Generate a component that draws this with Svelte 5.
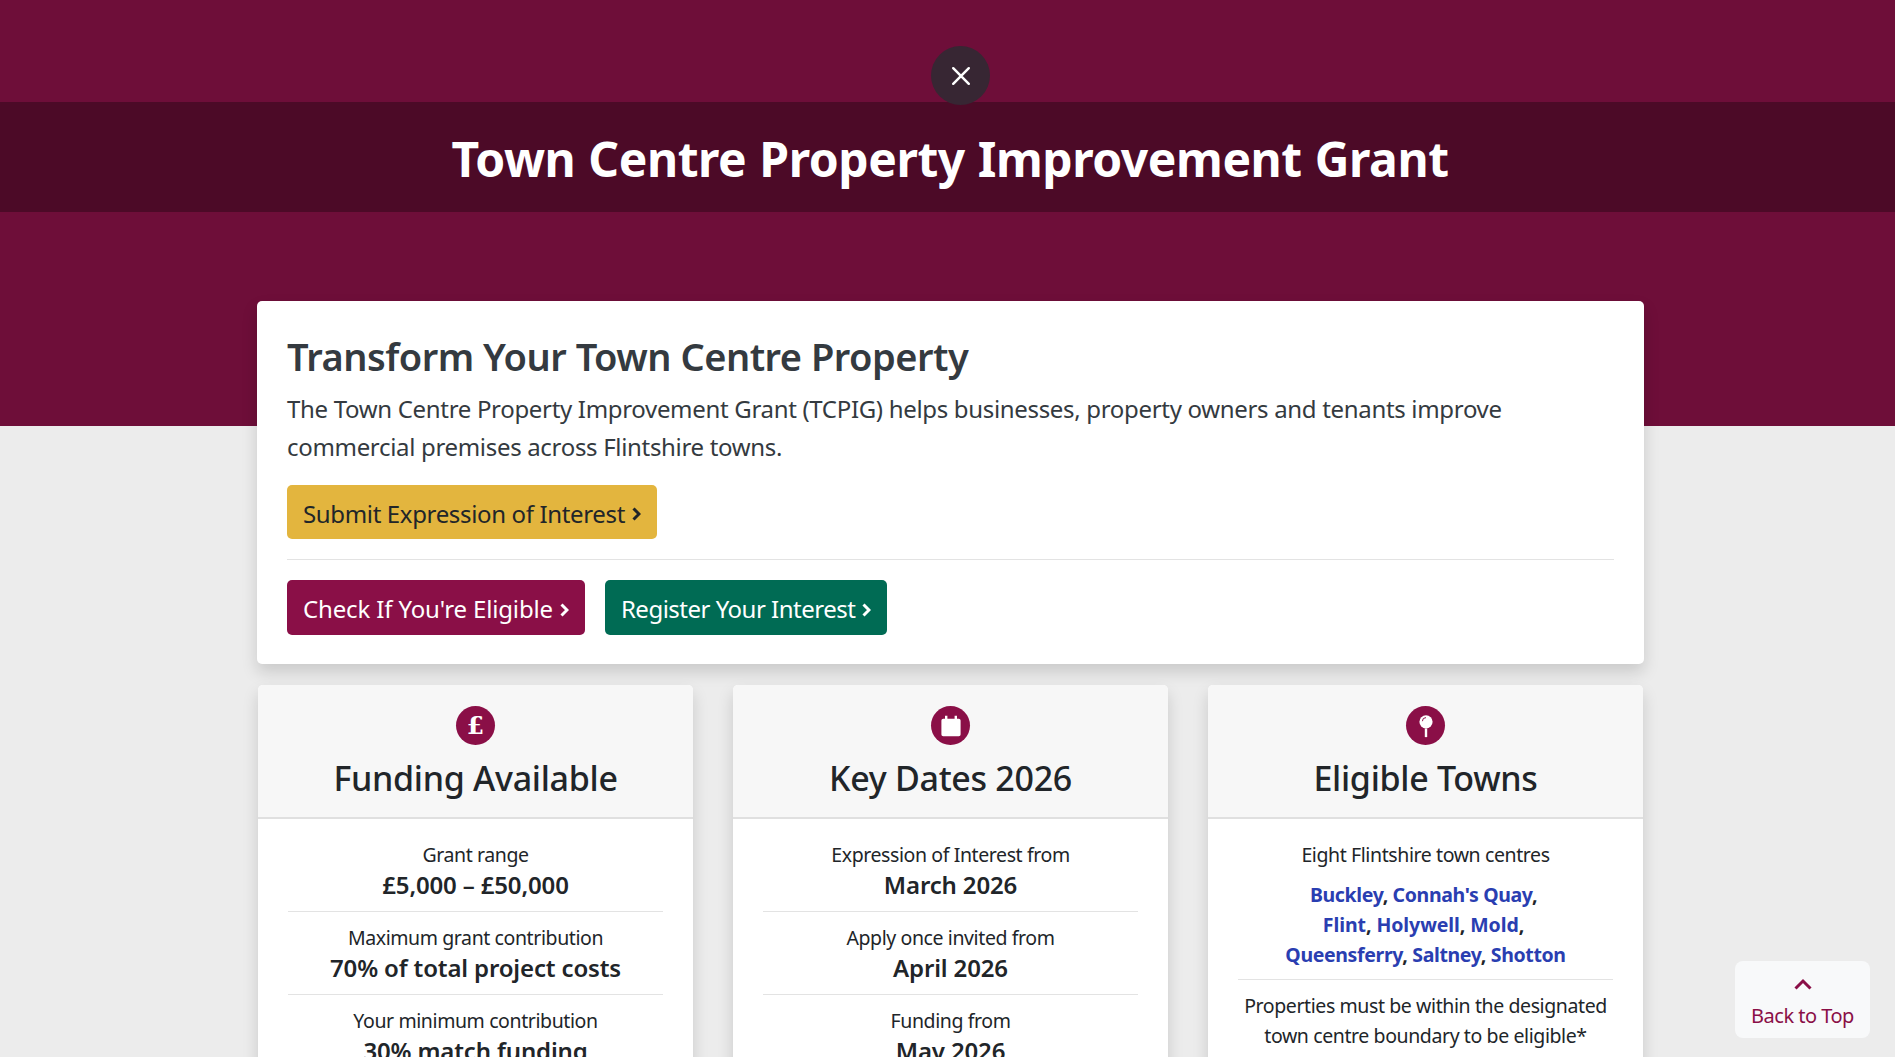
<script>
  const cards = [
    { title: 'Funding Available', icon: 'pound', rows: [
      ['Grant range', '£5,000 – £50,000'],
      ['Maximum grant contribution', '70% of total project costs'],
      ['Your minimum contribution', '30% match funding'] ] },
    { title: 'Key Dates 2026', icon: 'cal', rows: [
      ['Expression of Interest from', 'March 2026'],
      ['Apply once invited from', 'April 2026'],
      ['Funding from', 'May 2026'] ] },
    { title: 'Eligible Towns', icon: 'pin', rows: [] }
  ];
  const towns = [['Buckley', "Connah's Quay"], ['Flint', 'Holywell', 'Mold'], ['Queensferry', 'Saltney', 'Shotton']];
</script>

{#snippet chev()}
  <svg class="chev" viewBox="0 0 10 16" aria-hidden="true"><path d="M2.500 2.500 8 8l-5.500 5.500" fill="none" stroke="currentColor" stroke-width="3"/></svg>
{/snippet}

<div class="page">
  <header class="hero">
    <button class="close" aria-label="Close">
      <svg viewBox="0 0 20 20" width="26" height="26"><path d="M4 4l12 12M16 4 4 16" stroke="#fff" stroke-width="1.900" stroke-linecap="round"/></svg>
    </button>
    <div class="band"><h1>Town Centre Property Improvement Grant</h1></div>
  </header>

  <main class="wrap">
    <section class="intro">
      <h2>Transform Your Town Centre Property</h2>
      <p>The Town Centre Property Improvement Grant (TCPIG) helps businesses, property owners and tenants improve commercial premises across Flintshire towns.</p>
      <a class="btn yellow" href="#top">Submit Expression of Interest {@render chev()}</a>
      <hr />
      <div class="btns">
        <a class="btn maroon" href="#top">Check If You're Eligible {@render chev()}</a>
        <a class="btn green" href="#top">Register Your Interest {@render chev()}</a>
      </div>
    </section>

    <div class="grid">
      {#each cards as c}
        <article class="card">
          <div class="head">
            <span class="badge">
              {#if c.icon === 'pound'}
                <span class="pound">£</span>
              {:else if c.icon === 'cal'}
                <svg viewBox="0 0 20 20" width="24" height="24"><path fill="#fff" d="M5 1.500h2v2.500h6V1.500h2v2.500h1.500A1.500 1.500 0 0 1 18 5.500V17a1.500 1.500 0 0 1-1.500 1.500h-13A1.500 1.500 0 0 1 2 17V5.500A1.500 1.500 0 0 1 3.500 4H5z"/></svg>
              {:else}
                <svg viewBox="0 0 20 20" width="24" height="24"><circle cx="10" cy="6.500" r="5.500" fill="#fff"/><path d="M9 12h2v6.500l-1 1-1-1z" fill="#fff"/><path d="M7 6a3 3 0 0 1 3-3" fill="none" stroke="#8a0f47" stroke-width=".8"/></svg>
              {/if}
            </span>
            <h3>{c.title}</h3>
          </div>
          <div class="body">
            {#if c.rows.length}
              {#each c.rows as r}
                <div class="row"><span class="lab">{r[0]}</span><strong>{r[1]}</strong></div>
              {/each}
            {:else}
              <div class="lab first">Eight Flintshire town centres</div>
              <div class="towns">
                {#each towns as line}
                  <div>
                    {#each line as t, i}<a href="#top">{t}</a>{#if i < line.length - 1 || line[0] !== 'Queensferry'},{/if}{' '}{/each}
                  </div>
                {/each}
              </div>
              <div class="note">Properties must be within the designated town centre boundary to be eligible*</div>
            {/if}
          </div>
        </article>
      {/each}
    </div>
  </main>

  <a class="top" href="#top">
    <svg viewBox="0 0 20 12" width="20" height="12"><path d="M2.500 10.500 10 3l7.500 7.500" fill="none" stroke="currentColor" stroke-width="3"/></svg>
    <span>Back to Top</span>
  </a>
</div>

<style>
  :global(body) { margin: 0; background: #ececec; }
  .page { position: relative; height: 100vh; overflow: hidden; background: #ececec; color: #212529; font-family: "Noto Sans", "Open Sans", sans-serif; }
  .hero { position: relative; height: 426px; background: #6e0e39; padding-top: 102px; box-sizing: border-box; }
  .close { position: absolute; left: 931px; top: 46px; width: 59px; height: 59px; border: 0; border-radius: 50%; background: #372633; display: flex; align-items: center; justify-content: center; padding: 0; z-index: 2; }
  .band { height: 110px; background: #4c0a27; display: flex; align-items: center; justify-content: center; padding: 4px 0 0 5px; box-sizing: border-box; }
  h1 { margin: 0; color: #fff; font-size: 48px; font-weight: 700; line-height: 1.2; letter-spacing: -0.45px; word-spacing: 1px; }
  .wrap { width: 1387px; margin: -125px 0 0 257px; position: relative; display: flex; flex-direction: column; gap: 21px; }
  .intro { background: #fff; border-radius: 5px; padding: 32px 30px 0; height: 363px; box-sizing: border-box; box-shadow: 0 8px 16px rgba(0,0,0,.15); display: flex; flex-direction: column; align-items: flex-start; }
  h2 { margin: 0; font-size: 38px; line-height: 46px; font-weight: 600; color: #343a40; letter-spacing: -0.5px; }
  .intro p { margin: 0; font-size: 24px; line-height: 37.5px; color: #343a40; padding-top: 11px; letter-spacing: -0.32px; }
  .btn { display: inline-flex; align-items: center; gap: 6px; height: 54px; box-sizing: border-box; padding: 2px 16px 0; border-radius: 5px; text-decoration: none; font-size: 24px; letter-spacing: -0.35px; }
  .chev { width: 10px; height: 16px; margin-top: 2px; }
  .yellow { background: #e3b53e; color: #212529; margin-top: 20px; }
  hr { align-self: stretch; border: 0; border-top: 1px solid #e3e3e3; margin: 20px 0; }
  .btns { display: flex; gap: 20px; }
  .btns .btn { height: 55px; }
  .btns .maroon { background: #8a0f47; color: #fff; letter-spacing: -0.15px; }
  .btns .green { background: #006b54; color: #fff; letter-spacing: -0.5px; }
  .grid { display: grid; grid-template-columns: repeat(3, 435px); gap: 40px; margin-left: 1px; }
  .card { background: #fff; border-radius: 5px; box-shadow: 0 8px 16px rgba(0,0,0,.15); height: 600px; overflow: hidden; }
  .head { height: 134px; box-sizing: border-box; background: #f7f7f7; border-bottom: 2px solid #e0e0e0; padding-top: 21px; display: flex; flex-direction: column; align-items: center; }
  .badge { width: 39px; height: 39px; border-radius: 50%; background: #8a0f47; display: flex; align-items: center; justify-content: center; }
  .pound { color: #fff; font-family: "DejaVu Serif", serif; font-weight: 700; font-size: 25px; line-height: 1; }
  h3 { margin: 12px 0 0; font-size: 34px; line-height: 42px; font-weight: 500; letter-spacing: -0.3px; }
  .body { padding: 10px 30px 20px; text-align: center; }
  .row { display: flex; flex-direction: column; height: 83px; box-sizing: border-box; padding-top: 11px; border-bottom: 1px solid #e3e3e3; }
  .row:last-child { border-bottom: 0; }
  .lab { font-size: 19.5px; line-height: 30px; letter-spacing: -0.4px; }
  strong { font-size: 24px; line-height: 30px; font-weight: 600; letter-spacing: -0.15px; }
  .first { padding-top: 11px; }
  .towns { margin-top: 10px; padding-bottom: 9px; border-bottom: 1px solid #e3e3e3; font-size: 19.5px; line-height: 30px; font-weight: 700; letter-spacing: -0.35px; }
  .towns div:not(:last-child) { padding-right: 4px; }
  .towns div:nth-child(2) { letter-spacing: -0.08px; }
  .towns a { color: #2a3eb1; text-decoration: none; }
  .note { font-size: 19.5px; line-height: 30px; margin-top: 11px; letter-spacing: -0.4px; }
  .top { position: absolute; left: 1735px; top: 961px; width: 135px; height: 77px; box-sizing: border-box; padding-top: 17px; border-radius: 8px; background: #f8f9fa; color: #8a0f47; text-decoration: none; display: flex; flex-direction: column; align-items: center; gap: 12px; font-size: 20px; line-height: 27px; letter-spacing: -0.5px; z-index: 3; }
</style>
